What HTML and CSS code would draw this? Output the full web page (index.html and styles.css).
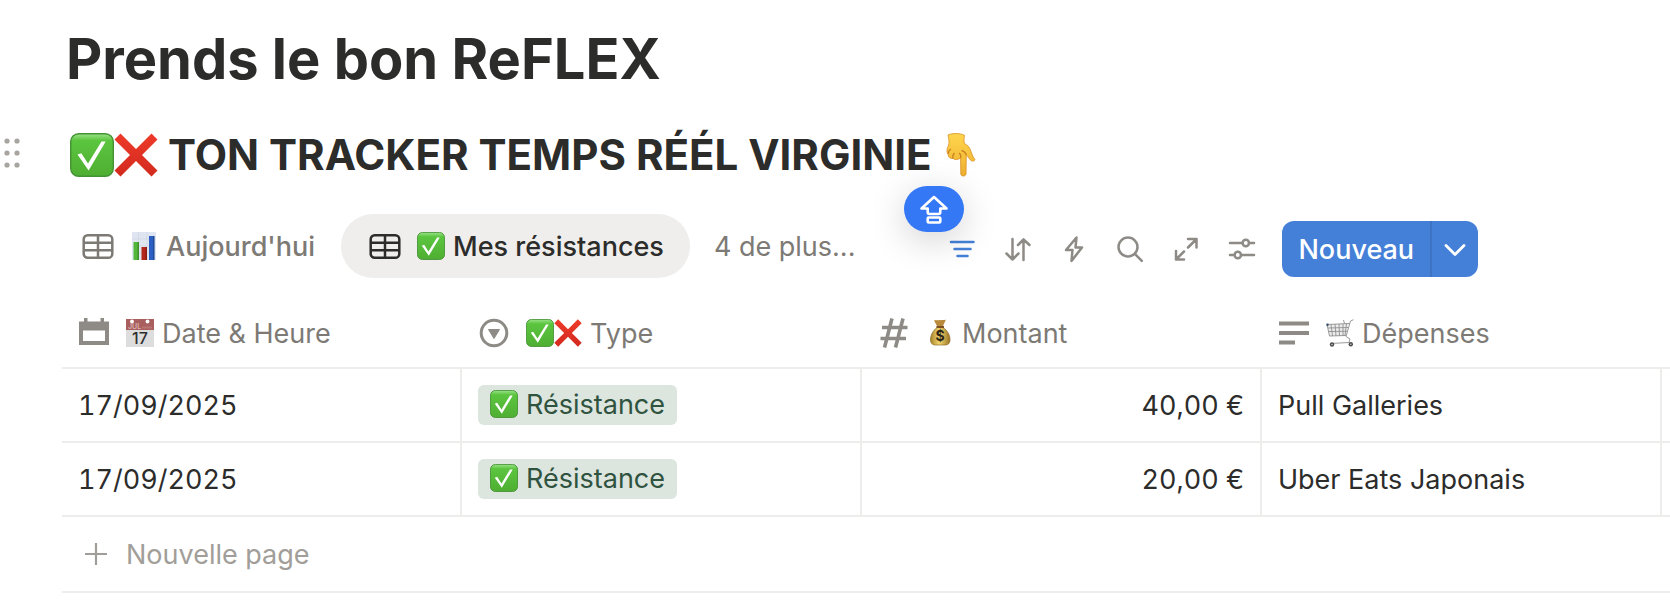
FILE: index.html
```
<!DOCTYPE html>
<html lang="fr">
<head>
	<meta charset="utf-8">
	<title>Prends le bon ReFLEX</title>
	<link rel="stylesheet" href="styles.css">
</head>
<body>
	<!-- shared icons -->
	<svg class="sprite" aria-hidden="true">
		<defs>
			<linearGradient id="green" x1="0" y1="0" x2="0" y2="1">
				<stop offset="0" stop-color="#9be38a"/>
				<stop offset="0.16" stop-color="#5bc53f"/>
				<stop offset="1" stop-color="#4fae32"/>
			</linearGradient>
			<linearGradient id="red" x1="0" y1="0" x2="0" y2="1">
				<stop offset="0" stop-color="#ee3a2a"/>
				<stop offset="1" stop-color="#d22a1e"/>
			</linearGradient>
			<linearGradient id="skin" x1="0" y1="0" x2="0" y2="1">
				<stop offset="0" stop-color="#ffd54e"/>
				<stop offset="1" stop-color="#eeb02f"/>
			</linearGradient>
			<linearGradient id="gold" x1="0" y1="0" x2="1" y2="0">
				<stop offset="0" stop-color="#a8842c"/>
				<stop offset="0.45" stop-color="#f2d770"/>
				<stop offset="1" stop-color="#9c7424"/>
			</linearGradient>
		</defs>
		<symbol id="check" viewBox="0 0 44 44">
			<rect x="0.7" y="0.7" width="42.6" height="42.6" rx="8" fill="url(#green)" stroke="#459234" stroke-width="1.4"/>
			<path d="M7.5 21.5l3.8-1.3 6.7 10.3L31.5 8.5h4.2L18.6 37.5z" fill="#fff"/>
		</symbol>
		<symbol id="cross" viewBox="0 0 44 44">
			<path d="M6.5 0.5L22 16 37.5 0.5l6 6L28 22l15.5 15.5-6 6L22 28 6.5 43.5l-6-6L16 22 0.5 6.5z" fill="url(#red)"/>
		</symbol>
		<symbol id="hand" viewBox="0 0 44 44">
			<path d="M10 2c4-2 12-2 16.5 0.3-0.5 3-0.8 6 0 8.2 3.5 1.8 5.5 4.5 6.500 8 1 3.500 2.500 6 4 8.200-0.800 2-3.500 1.800-5-0.200-1.500-2-2.700-3.600-3.700-4.400L28 41c-0.500 2.700-4.700 2.700-5.200 0L22.600 25c-3 2-6 2-7.500 0.500-3 0.300-5-1.500-5-4-1.500-2.500-1.500-5.500 0-8C12 9.500 10.500 5.500 10 2z" fill="url(#skin)" stroke="#d98f22" stroke-width="0.8"/>
			<path d="M22.6 25c0.5-2 0-4-1.500-5M15 25.500c-0.500-2 0-4 1.500-5.500M10.200 21c0-2 1-4 2.800-5M28.300 22c-0.800-2.500-2.500-4-4.800-4.500" fill="none" stroke="#c98422" stroke-width="1.3"/>
		</symbol>
		<symbol id="chart" viewBox="0 0 28 28">
			<path d="M2 0h24v28H2z" fill="#dfe6f1"/>
			<path d="M2 7h24M2 14h24M2 21h24M8.5 0v28M17 0v28" stroke="#cdd6e4" stroke-width="0.7"/>
			<path d="M3.5 10H9v18H3.5z" fill="#52b83a"/>
			<path d="M11.5 15H17v13h-5.500z" fill="#b3261c"/>
			<path d="M19 4h5.500v24H19z" fill="#2b5fc4"/>
			<path d="M7.500 10H9v18H7.500zM15.500 15H17v13h-1.500zM23 4h1.500v24H23z" fill="#000" opacity="0.22"/>
		</symbol>
		<symbol id="cart" viewBox="0 0 28 28">
			<path d="M1 6l22-2-3 12.500L3.500 17z" fill="#ececec"/>
			<path d="M27.500 0.700L24.500 2 20 17.500 24 20l-1 3.500L4.500 24.500M1 5.500L3.500 17 20 16.500M1 5.500l22.500-1M2 9l20.500-0.500M2.500 12.500l19-0.300M5 5.500l1.500 11.500M9 5l1 12M13 5l0.500 12M17 5v12M20.500 4.500L19 16.500M17.500 1l1 3.500" fill="none" stroke="#8f8f8f" stroke-width="0.9"/>
			<path d="M0.500 4.500h2v2.500h-2z" fill="#34506e"/>
			<circle cx="6" cy="25.5" r="2.2" fill="#4c4c4c"/>
			<circle cx="24.8" cy="25.3" r="2.2" fill="#4c4c4c"/>
			<circle cx="6" cy="25.5" r="0.8" fill="#ccc"/>
			<circle cx="24.8" cy="25.3" r="0.8" fill="#ccc"/>
		</symbol>
		<symbol id="grid" viewBox="0 0 32 32">
			<g fill="none" stroke="currentColor" stroke-width="2.5">
				<rect x="1.7" y="5.2" width="28.6" height="22.6" rx="4"/>
				<path d="M1.7 12.700h28.600M1.700 20.300h28.600M16 5.200v22.600"/>
			</g>
		</symbol>
	</svg>

	<main class="page">
		<h1>Prends le bon ReFLEX</h1>

		<div class="heading">
			<button class="handle" aria-label="Déplacer">
				<svg width="24" height="32" viewBox="0 0 24 32" fill="currentColor">
					<circle cx="7" cy="4" r="2.6"/><circle cx="17" cy="4" r="2.6"/>
					<circle cx="7" cy="16" r="2.6"/><circle cx="17" cy="16" r="2.6"/>
					<circle cx="7" cy="28" r="2.6"/><circle cx="17" cy="28" r="2.6"/>
				</svg>
			</button>
			<h2>
				<svg class="emoji-lg"><use href="#check"/></svg>
				<svg class="emoji-lg"><use href="#cross"/></svg>
				<span class="heading-text">TON TRACKER TEMPS RÉÉL VIRGINIE</span>
				<svg class="emoji-lg"><use href="#hand"/></svg>
			</h2>
		</div>

		<div class="views">
			<div class="tabs">
				<button class="tab">
					<svg class="icon"><use href="#grid"/></svg>
					<span class="label"><svg class="emoji"><use href="#chart"/></svg>Aujourd'hui</span>
				</button>
				<button class="tab active">
					<svg class="icon"><use href="#grid"/></svg>
					<span class="label"><svg class="emoji"><use href="#check"/></svg>Mes résistances</span>
				</button>
				<button class="tab more">4 de plus...</button>
			</div>

			<div class="toolbar">
				<button class="tool filter" aria-label="Filtrer">
					<svg class="tool-icon" viewBox="0 0 28 28"><path d="M3 7h22.500M6.500 14h16M9.500 21h10"/></svg>
				</button>
				<button class="tool" aria-label="Trier">
					<svg class="tool-icon" viewBox="0 0 28 28"><path d="M8.500 4v20.500M2.500 18.500l6 6 6-6M19.500 25V4.500M14 10l5.500-5.500L25.500 10"/></svg>
				</button>
				<button class="tool" aria-label="Automatisations">
					<svg class="tool-icon" viewBox="0 0 28 28"><path d="M16.500 2.500L6 15h6.500L11.500 26 22 12.500h-6.500z"/></svg>
				</button>
				<button class="tool" aria-label="Rechercher">
					<svg class="tool-icon" viewBox="0 0 28 28"><circle cx="12" cy="12" r="9.5"/><path d="M18.800 18.800l7 7"/></svg>
				</button>
				<button class="tool" aria-label="Agrandir">
					<svg class="tool-icon" viewBox="0 0 28 28"><path d="M16 4h8.500v8.500M24.500 4l-8.500 8.500M12 24.500H4V16M4 24.500l8-8"/></svg>
				</button>
				<button class="tool" aria-label="Réglages">
					<svg class="tool-icon" viewBox="0 0 28 28"><path d="M2 8h12.500M21 8h5M2 20h4.500M13 20h13"/><circle cx="17.8" cy="8" r="3.2"/><circle cx="9.8" cy="20" r="3.2"/></svg>
				</button>
				<div class="new">
					<button class="new-main">Nouveau</button>
					<button class="new-more" aria-label="Plus d'options">
						<svg width="24" height="24" viewBox="0 0 24 24"><path d="M3 8.500l9 9 9-9" fill="none" stroke="#fff" stroke-width="2.8" stroke-linecap="round" stroke-linejoin="round"/></svg>
					</button>
				</div>

				<!-- caps lock indicator -->
				<div class="caps">
					<svg width="32" height="32" viewBox="0 0 32 32" fill="none" stroke="#fff" stroke-width="2.6" stroke-linejoin="round">
						<path d="M16 4L3.500 15.500h6.200v3.500c0 1.500 0.500 2 2 2h8.600c1.500 0 2-0.500 2-2v-3.500h6.200z"/>
						<rect x="9.7" y="24.500" width="12.600" height="5" rx="1"/>
					</svg>
				</div>
			</div>
		</div>

		<table>
			<colgroup>
				<col class="col"><col class="col"><col class="col"><col class="col"><col>
			</colgroup>
			<thead>
				<tr>
					<th>
						<div class="prop">
							<svg class="icon" viewBox="0 0 32 32"><path d="M6 1h3.500v3.500h13V1H26v3.500h5V28H1V4.500h5zM5 13.500V24h22V13.500z" fill="currentColor" fill-rule="evenodd"/></svg>
							<span class="label">
								<svg class="emoji" viewBox="0 0 28 28">
									<path d="M0 0h28v28H0z" fill="#dddddd"/>
									<path d="M0 0h28v11H0z" fill="#a95f5d"/>
									<path d="M16 7.500h10v2H16z" fill="#b87573"/>
									<circle cx="6" cy="2.5" r="1.9" fill="#fff"/>
									<circle cx="21.5" cy="2.5" r="1.9" fill="#fff"/>
									<text x="2" y="10" class="cal-month">JUL</text>
									<text x="14" y="25" text-anchor="middle" class="cal-day">17</text>
								</svg>Date &amp; Heure
							</span>
						</div>
					</th>
					<th>
						<div class="prop">
							<svg class="icon" viewBox="0 0 32 32"><circle cx="16" cy="16" r="12.8" fill="none" stroke="currentColor" stroke-width="3"/><path d="M10.500 12.500h11L16 21.500z" fill="currentColor" stroke="currentColor" stroke-linejoin="round"/></svg>
							<span class="label"><svg class="emoji"><use href="#check"/></svg><svg class="emoji"><use href="#cross"/></svg>Type</span>
						</div>
					</th>
					<th>
						<div class="prop">
							<svg class="icon" viewBox="0 0 32 32"><path d="M14 1.500L6.500 30.500M25 1.500l-7.500 29M4 10.500h25.500M2.500 21.500H28" fill="none" stroke="currentColor" stroke-width="3.6"/></svg>
							<span class="label">
								<svg class="emoji" viewBox="0 0 28 28">
									<path d="M10 1c2 1 3-0.500 4.500 0.300C16 0.500 18 1.500 20 0.500L17 7h-6L8 1.500z" fill="#b98a3c"/>
									<path d="M11 8.500c-4 3-6.500 7.500-6.500 12 0 4 2 5.500 5 5.500h9.500c3 0 5-1.500 5-5.500 0-4.500-2.500-9-7-12z" fill="url(#gold)" stroke="#8c6a26" stroke-width="0.7"/>
									<path d="M10.500 7h7.500v2h-7.500z" fill="#7c4f23"/>
									<text x="14" y="22" text-anchor="middle" class="dollar">$</text>
								</svg>Montant
							</span>
						</div>
					</th>
					<th>
						<div class="prop">
							<svg class="icon" viewBox="0 0 32 32"><path d="M1 6.500h30M1 16h30M1 25.500h16" fill="none" stroke="currentColor" stroke-width="3.8"/></svg>
							<span class="label"><svg class="emoji"><use href="#cart"/></svg>Dépenses</span>
						</div>
					</th>
					<th></th>
				</tr>
			</thead>
			<tbody>
				<tr>
					<td class="date">17/09/2025</td>
					<td><span class="tag"><svg class="emoji"><use href="#check"/></svg>Résistance</span></td>
					<td class="number">40,00 €</td>
					<td>Pull Galleries</td>
					<td></td>
				</tr>
				<tr>
					<td class="date">17/09/2025</td>
					<td><span class="tag"><svg class="emoji"><use href="#check"/></svg>Résistance</span></td>
					<td class="number">20,00 €</td>
					<td>Uber Eats Japonais</td>
					<td></td>
				</tr>
			</tbody>
		</table>

		<button class="add">
			<svg class="icon" viewBox="0 0 32 32"><path d="M18 5v22M7 16h22" fill="none" stroke="currentColor" stroke-width="2.2"/></svg>
			Nouvelle page
		</button>
	</main>
</body>
</html>
```
FILE: styles.css
```
* {
	box-sizing: border-box;
}

body {
	margin: 0;
	background-color: #fff;
	color: #2c2c2b;
	font-family: Inter, "Liberation Sans", sans-serif;
	font-size: 27px;
	overflow-x: hidden;
}

button {
	padding: 0;
	border: 0;
	background: none;
	color: inherit;
	font: inherit;
	cursor: pointer;
}

svg {
	flex: none;
}

.sprite {
	position: absolute;
	width: 0;
	height: 0;
}

.page {
	padding: 22px 0 12px 62px;
}

h1 {
	margin: 0;
	padding-left: 4px;
	font-size: 56px;
	font-weight: 700;
	line-height: 74px;
}

.heading {
	display: flex;
	align-items: center;
	margin: 32px 0 32px -62px;
}

.handle {
	display: flex;
	width: 70px;
	padding-bottom: 4px;
	color: #a8a5a0;
}

h2 {
	display: flex;
	align-items: center;
	margin: 0;
	font-size: 42px;
	font-weight: 700;
	line-height: 54px;
	white-space: nowrap;
}

.heading-text {
	padding: 0 6px 0 10px;
}

.emoji-lg {
	width: 44px;
	height: 44px;
}

.emoji {
	width: 28px;
	height: 28px;
	margin-right: 8px;
}

.emoji:has(+ .emoji) {
	margin-right: 0;
}

.icon {
	width: 32px;
	height: 32px;
}

.label {
	display: flex;
	align-items: center;
	white-space: nowrap;
}

.cal-month {
	font-size: 7px;
	font-weight: 600;
	fill: #d9b5b4;
}

.cal-day {
	font-size: 16px;
	font-weight: 500;
	fill: #2e2e2e;
}

.dollar {
	font-size: 14px;
	font-weight: 700;
	fill: #2b2415;
}

/* views bar */
.views {
	display: flex;
	align-items: center;
	margin-left: -8px;
}

.tabs {
	display: flex;
	align-items: center;
}

.tab {
	display: flex;
	align-items: center;
	gap: 16px;
	height: 64px;
	padding: 0 26px 0 28px;
	border-radius: 32px;
	color: #7d7a75;
	font-weight: 500;
	white-space: nowrap;
}

.tab.active {
	background-color: #efeeec;
	color: #2c2c2b;
}

.tab.more {
	padding: 0 24px;
	font-weight: 400;
}

.toolbar {
	position: relative;
	display: flex;
	align-items: center;
	margin: 6px 0 0 55px;
}

.tool {
	display: flex;
	align-items: center;
	justify-content: center;
	width: 56px;
	height: 56px;
	color: #8e8b86;
}

.tool.filter {
	color: #4380d8;
}

.tool-icon {
	width: 28px;
	height: 28px;
	fill: none;
	stroke: currentColor;
	stroke-width: 2.5;
	stroke-linecap: round;
	stroke-linejoin: round;
}

.new {
	display: flex;
	height: 56px;
	margin-left: 12px;
	border-radius: 12px;
	background-color: #4480d8;
	color: #fff;
	font-weight: 500;
	overflow: hidden;
}

.new-main {
	padding: 0 16px;
}

.new-more {
	display: flex;
	align-items: center;
	justify-content: center;
	width: 48px;
	border-left: 2px solid #3d73c3;
}

.caps {
	position: absolute;
	top: -35px;
	left: -30px;
	display: flex;
	align-items: center;
	justify-content: center;
	width: 60px;
	height: 46px;
	border-radius: 23px;
	background-color: #3478f6;
	box-shadow: 0 8px 36px rgba(0, 0, 0, 0.18);
}

/* table */
table {
	width: 100%;
	margin-top: 21px;
	border-collapse: separate;
	border-spacing: 0;
	table-layout: fixed;
}

.col {
	width: 400px;
}

th {
	height: 70px;
	padding: 0 16px;
	border-bottom: 2px solid #ededec;
	color: #7d7a75;
	font-weight: 400;
	text-align: left;
}

.prop {
	display: flex;
	align-items: center;
	gap: 16px;
}

.prop .icon {
	color: #8e8b86;
}

td {
	height: 74px;
	padding: 0 16px;
	border-right: 2px solid #ededec;
	border-bottom: 2px solid #ededec;
}

th:last-child,
td:last-child {
	padding: 0;
	border-right: 0;
}

.date,
.number {
	font-variant-numeric: tabular-nums;
}

.number {
	text-align: right;
}

.tag {
	display: flex;
	align-items: center;
	width: fit-content;
	height: 40px;
	padding: 0 12px 2px;
	border-radius: 6px;
	background-color: #dce5de;
	color: #2f533f;
}

.add {
	display: flex;
	align-items: center;
	gap: 16px;
	width: 100%;
	height: 76px;
	padding-left: 16px;
	border-bottom: 2px solid #ededec;
	color: #a19e99;
}
```
